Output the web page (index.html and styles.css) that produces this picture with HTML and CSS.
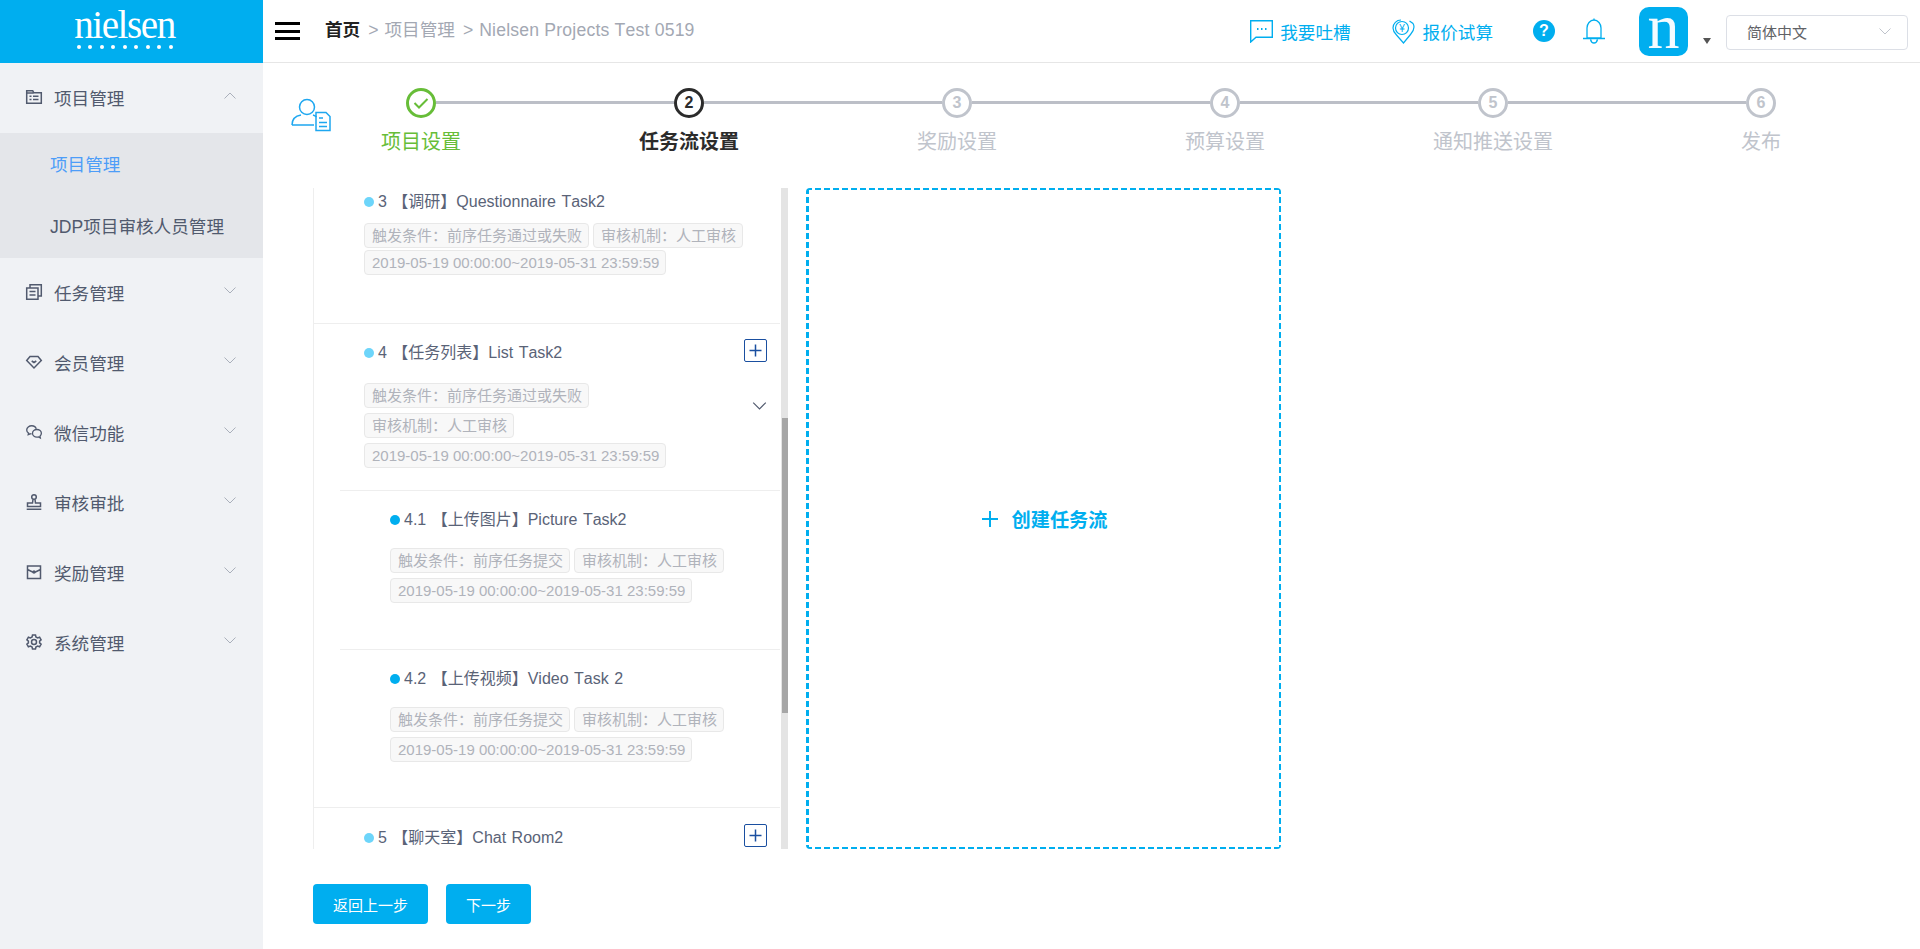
FILE: index.html
```html
<!DOCTYPE html>
<html lang="zh-CN">
<head>
  <meta charset="UTF-8" />
  <meta name="viewport" content="width=device-width, initial-scale=1" />
  <title>任务流设置</title>
  <link rel="stylesheet" href="styles.css">
</head>
<body>
  <svg class="sprite" width="0" height="0">
    <symbol id="chev" viewBox="0 0 12 7"><path d="M.5.5 6 6 11.500.5" fill="none" stroke="currentColor"/></symbol>
    <symbol id="plus" viewBox="0 0 23 23"><path d="M10.500 4.500v12M4.500 10.500h12" fill="none" stroke="currentColor" stroke-width="1.500"/></symbol>
  </svg>

  <aside class="sidebar">
    <div class="logo">
      <span class="logo-text">nielsen</span>
      <div class="logo-dots"><i></i><i></i><i></i><i></i><i></i><i></i><i></i><i></i><i></i></div>
    </div>
    <nav class="menu">
      <div class="menu-item">
        <svg class="menu-icon" viewBox="0 0 16 16"><path d="M.7 14.300V1.700h6l1 2h7.600v10.600zM.7 4h7" /><path d="M3.500 7.200h2M7 7.200h5.500M3.500 10.500h2M7 10.500h5.500"/></svg>
        <span>项目管理</span>
        <svg class="menu-chev up"><use href="#chev"/></svg>
      </div>
      <div class="submenu">
        <a class="sub-link active">项目管理</a>
        <a class="sub-link">JDP项目审核人员管理</a>
      </div>
      <div class="menu-item">
        <svg class="menu-icon" viewBox="0 0 16 16"><path d="M.7 4h11.300v11.300H.7z"/><path d="M4 4V.7h11.300v11.300H12M3.500 7.500h6M3.500 11h6"/></svg>
        <span>任务管理</span>
        <svg class="menu-chev"><use href="#chev"/></svg>
      </div>
      <div class="menu-item">
        <svg class="menu-icon" viewBox="0 0 16 16"><path d="M4 2.500h8L15.300 6.500 8 14 .7 6.500z"/><path d="M5.700 7 8 8.500 10.300 7"/></svg>
        <span>会员管理</span>
        <svg class="menu-chev"><use href="#chev"/></svg>
      </div>
      <div class="menu-item">
        <svg class="menu-icon" viewBox="0 0 18 16"><path d="M11.500 4.500C11 2.500 9 1 6.500 1 3.500 1 .8 3 .8 5.700c0 1.500.8 2.700 2 3.500L2.500 11l2.200-1c.6.200 1 .2 1.600.2"/><path d="M17.300 9.500c0-2.500-2.300-4.300-5-4.300s-5 1.800-5 4.300 2.300 4.300 5 4.300c.6 0 1.200-.1 1.800-.3l2 1.200-.4-2c1-.8 1.600-2 1.600-3.200z"/></svg>
        <span>微信功能</span>
        <svg class="menu-chev"><use href="#chev"/></svg>
      </div>
      <div class="menu-item">
        <svg class="menu-icon" viewBox="0 0 16 16"><circle cx="8" cy="3" r="2.300"/><path d="M7 5.300 6.500 9H1.500v3.500h13V9H9.500L9 5.300M.7 15.300h14.600"/></svg>
        <span>审核审批</span>
        <svg class="menu-chev"><use href="#chev"/></svg>
      </div>
      <div class="menu-item">
        <svg class="menu-icon" viewBox="0 0 16 16"><path d="M1.500 2h13v12.500h-13zM1.500 5.500l5 2.500h3l5-2.500"/><circle cx="8" cy="8" r="1"/></svg>
        <span>奖励管理</span>
        <svg class="menu-chev"><use href="#chev"/></svg>
      </div>
      <div class="menu-item">
        <svg class="menu-icon" viewBox="0 0 16 16"><path d="M6.500.9h3l.4 2 1.700 1 2-.7 1.500 2.600-1.500 1.300v1.800l1.500 1.300-1.500 2.600-2-.7-1.700 1-.4 2h-3l-.4-2-1.700-1-2 .7L.9 10.200l1.500-1.300V7.100L.9 5.800l1.500-2.600 2 .7 1.700-1z"/><circle cx="8" cy="8" r="2.500"/></svg>
        <span>系统管理</span>
        <svg class="menu-chev"><use href="#chev"/></svg>
      </div>
    </nav>
  </aside>

  <div class="main">
    <header class="topbar">
      <div class="hamburger"><i></i><i></i><i></i></div>
      <div class="crumbs">
        <b>首页</b><span class="sep">&gt;</span><span>项目管理</span><span class="sep">&gt;</span><span class="crumb-name">Nielsen Projects Test 0519</span>
      </div>
      <div class="top-right">
        <a class="top-link">
          <svg class="chat-icon" viewBox="0 0 23 23"><path d="M.7.7h21.600v16.600H6L.7 22z" /><path d="M7 9h1.500M11 9h1.500M15 9h1.500" stroke-width="2"/></svg>
          <span>我要吐槽</span>
        </a>
        <a class="top-link quote">
          <svg class="quote-icon" viewBox="0 0 23 25"><path d="M9 1C4.500 1 1 4.500 1 9c0 3 1.500 5 3.500 7l7 8 7-8.500c2-2.200 3.500-4.500 3.500-7.500 0-1.300-.3-2.500-1-3.500L17.500 2" /><circle cx="10" cy="9" r="6.500"/><text x="10" y="12.500" text-anchor="middle">¥</text></svg>
          <span>报价试算</span>
        </a>
        <span class="help">?</span>
        <svg class="bell" viewBox="0 0 24 26"><path d="M5 20V10c0-4 3-8 7-8s7 4 7 8v10zM1 20.500h22M8.500 21.500c.5 2 2 3.500 3.500 3.500s3-1.500 3.500-3.500M12 .5v1.500"/></svg>
        <div class="avatar">n</div>
        <span class="caret"></span>
        <div class="lang">
          <span>简体中文</span>
          <svg class="lang-chev"><use href="#chev"/></svg>
        </div>
      </div>
    </header>

    <section class="steps-row">
      <svg class="user-icon" viewBox="0 0 40 34"><circle cx="16" cy="9" r="7.500"/><path d="M1 27c0-6 3-9 9-10M22 17c1.500 .5 2.500 1 3.500 2M1 27h22"/><path d="M25 14.500h10l4 4v14H25z"/><path d="M28 20h4M28 24.500h8M28 28.500h8"/></svg>
      <ol class="steps">
        <li class="step done">
          <span class="circle"><svg viewBox="0 0 16 16" width="16" height="16"><path d="M1.500 8 6 12.500 14.500 4" fill="none" stroke="currentColor" stroke-width="2"/></svg></span>
          <span class="step-label">项目设置</span>
        </li>
        <li class="step current"><span class="circle">2</span><span class="step-label">任务流设置</span></li>
        <li class="step"><span class="circle">3</span><span class="step-label">奖励设置</span></li>
        <li class="step"><span class="circle">4</span><span class="step-label">预算设置</span></li>
        <li class="step"><span class="circle">5</span><span class="step-label">通知推送设置</span></li>
        <li class="step"><span class="circle">6</span><span class="step-label">发布</span></li>
      </ol>
    </section>

    <section class="workspace">
      <div class="list-panel">
        <div class="list">
          <div class="item item-first">
            <div class="item-title"><i class="dot"></i>3 【调研】Questionnaire Task2</div>
            <div class="tags tags-tight">
              <span class="tag">触发条件：前序任务通过或失败</span>
              <span class="tag">审核机制：人工审核</span>
              <span class="tag">2019-05-19 00:00:00~2019-05-31 23:59:59</span>
            </div>
          </div>

          <div class="item item-open">
            <div class="item-head">
              <div class="item-title"><i class="dot"></i>4 【任务列表】List Task2</div>
              <span class="add"><svg width="23" height="23"><use href="#plus"/></svg></span>
            </div>
            <div class="item-body">
              <div class="tags tags-narrow">
                <span class="tag">触发条件：前序任务通过或失败</span>
                <span class="tag">审核机制：人工审核</span>
                <span class="tag">2019-05-19 00:00:00~2019-05-31 23:59:59</span>
              </div>
              <svg class="fold"><use href="#chev"/></svg>
            </div>
            <div class="sub">
              <div class="item-title"><i class="dot dot-sub"></i>4.1 【上传图片】Picture Task2</div>
              <div class="tags">
                <span class="tag">触发条件：前序任务提交</span>
                <span class="tag">审核机制：人工审核</span>
                <span class="tag">2019-05-19 00:00:00~2019-05-31 23:59:59</span>
              </div>
            </div>
            <div class="sub sub-last">
              <div class="item-title"><i class="dot dot-sub"></i>4.2 【上传视频】Video Task 2</div>
              <div class="tags">
                <span class="tag">触发条件：前序任务提交</span>
                <span class="tag">审核机制：人工审核</span>
                <span class="tag">2019-05-19 00:00:00~2019-05-31 23:59:59</span>
              </div>
            </div>
          </div>

          <div class="item item-last">
            <div class="item-head">
              <div class="item-title"><i class="dot"></i>5 【聊天室】Chat Room2</div>
              <span class="add"><svg width="23" height="23"><use href="#plus"/></svg></span>
            </div>
          </div>
        </div>
        <div class="scroll-track"><div class="scroll-thumb"></div></div>
      </div>

      <div class="create-box">
        <svg class="create-plus" viewBox="0 0 16 16"><path d="M8 0v16M0 8h16" fill="none" stroke="currentColor" stroke-width="2"/></svg>
        <span>创建任务流</span>
      </div>
    </section>

    <footer class="actions">
      <button class="btn">返回上一步</button>
      <button class="btn">下一步</button>
    </footer>
  </div>
</body>
</html>
```

FILE: styles.css
```css
* {
  box-sizing: border-box;
}
html,
body {
  margin: 0;
  height: 949px;
  overflow: hidden;
}
body {
  display: flex;
  font-family: "Liberation Sans", "Noto Sans CJK SC", sans-serif;
  background: #fff;
  color: #515a6e;
}
.sprite {
  position: absolute;
}

/* sidebar */
.sidebar {
  width: 263px;
  flex: none;
  background: #f0f2f5;
}
.logo {
  height: 63px;
  background: #00aeef;
  color: #fff;
  display: flex;
  flex-direction: column;
  align-items: center;
  padding: 9px 14px 0 0;
}
.logo-text {
  font-family: "Liberation Serif", serif;
  font-size: 39px;
  line-height: 32px;
  letter-spacing: -1.400px;
}
.logo-dots {
  width: 96px;
  margin-top: 4px;
  display: flex;
  justify-content: space-between;
}
.logo-dots i {
  width: 4px;
  height: 4px;
  border-radius: 50%;
  background: #fff;
}
.menu-item {
  height: 70px;
  display: flex;
  align-items: center;
  padding: 0 0 2px 26px;
  font-size: 17.600px;
}
.menu-icon {
  width: 16px;
  height: 16px;
  margin-right: 12px;
  fill: none;
  stroke: #515a6e;
  stroke-width: 1.500;
  overflow: visible;
}
.menu-chev {
  width: 12px;
  height: 7px;
  margin-left: auto;
  margin-right: 27px;
  color: #aab0bb;
  margin-top: -4px;
}
.menu-chev.up {
  transform: rotate(180deg);
}
.submenu {
  background: #e4e6ea;
  height: 125px;
  padding-top: 1px;
}
.sub-link {
  display: block;
  height: 62px;
  line-height: 62px;
  padding-left: 50px;
  font-size: 17.600px;
}
.sub-link.active {
  color: #4d9df8;
}

/* top bar */
.main {
  flex: 1;
  min-width: 0;
}
.topbar {
  height: 63px;
  border-bottom: 1px solid #e6e6e6;
  display: flex;
  align-items: center;
  padding-left: 12px;
}
.hamburger {
  width: 25px;
  height: 18px;
  display: flex;
  flex-direction: column;
  justify-content: space-between;
  margin-right: 25px;
}
.hamburger i {
  height: 3px;
  background: #000;
}
.crumbs {
  font-size: 17.600px;
  line-height: 24px;
  color: #a3a8b3;
  display: flex;
  align-items: baseline;
  margin-top: -2px;
}
.crumbs b {
  color: #222;
}
.crumb-name {
  font-kerning: none;
  letter-spacing: .2px;
}
.sep {
  margin: 0 6px 0 8px;
}
.top-right {
  margin-left: auto;
  display: flex;
  align-items: center;
}
.top-link {
  display: flex;
  align-items: center;
  font-size: 17.600px;
  color: #00aeef;
  white-space: nowrap;
}
.chat-icon {
  width: 23px;
  height: 23px;
  margin-right: 7px;
  fill: none;
  stroke: #00aeef;
  stroke-width: 1.400;
}
.quote {
  margin-left: 41px;
}
.quote-icon {
  width: 23px;
  height: 25px;
  margin-right: 8px;
  fill: none;
  stroke: #00aeef;
  stroke-width: 1.200;
}
.quote-icon text {
  font-size: 10px;
  fill: #00aeef;
  stroke: none;
}
.help {
  width: 22px;
  height: 22px;
  margin-left: 40px;
  border-radius: 50%;
  background: #00aeef;
  color: #fff;
  font-size: 16px;
  font-weight: bold;
  line-height: 22px;
  text-align: center;
}
.bell {
  width: 24px;
  height: 26px;
  margin-left: 27px;
  fill: none;
  stroke: #00aeef;
  stroke-width: 1.300;
}
.avatar {
  width: 49px;
  height: 49px;
  margin-left: 33px;
  border-radius: 10px;
  background: #00aeef;
  color: #f4fbff;
  font-family: "Liberation Serif", serif;
  font-size: 64px;
  line-height: 39px;
  text-align: center;
}
.caret {
  width: 0;
  height: 0;
  margin: 20px 0 0 15px;
  border-style: solid;
  border-width: 6px 4.500px 0;
  border-color: #555 transparent transparent;
}
.lang {
  width: 182px;
  height: 35px;
  margin: 3px 12px 0 15px;
  padding: 0 16px 2px 20px;
  border: 1px solid #dcdfe6;
  border-radius: 4px;
  display: flex;
  align-items: center;
  justify-content: space-between;
  font-size: 15px;
  color: #606266;
}
.lang-chev {
  width: 12px;
  height: 7px;
  color: #c0c4cc;
}

/* steps */
.steps-row {
  height: 125px;
  padding: 25px 0 0 28px;
  display: flex;
}
.user-icon {
  width: 40px;
  height: 34px;
  margin: 10px 10px 0 0;
  fill: none;
  stroke: #1ea7f0;
  stroke-width: 1.500;
}
.steps {
  list-style: none;
  margin: 0;
  padding: 0;
  display: flex;
  gap: 108px;
}
.step {
  width: 160px;
  display: flex;
  flex-direction: column;
  align-items: center;
  position: relative;
  color: #c0c4cc;
}
.step:not(:last-child)::after {
  content: "";
  position: absolute;
  left: 95px;
  top: 13px;
  width: 238px;
  height: 3px;
  background: #bcbfc7;
}
.circle {
  width: 30px;
  height: 30px;
  border: 3px solid currentColor;
  border-radius: 50%;
  display: flex;
  align-items: center;
  justify-content: center;
  font-size: 16px;
  font-weight: bold;
}
.step-label {
  margin-top: 10px;
  font-size: 20px;
  line-height: 28px;
  white-space: nowrap;
}
.step.done {
  color: #67bd38;
}
.step.current {
  color: #2b2b2b;
}
.step.current .step-label {
  font-weight: bold;
}

/* task list */
.workspace {
  margin-left: 50px;
  height: 661px;
  display: flex;
  gap: 18px;
}
.list-panel {
  width: 475px;
  height: 661px;
  display: flex;
  overflow: hidden;
}
.list {
  flex: 1;
  border-left: 1px solid #eee;
}
.scroll-track {
  width: 7px;
  margin-left: 1px;
  background: #e4e4e4;
}
.scroll-thumb {
  width: 6px;
  height: 295px;
  margin: 230px 0 0 1px;
  background: #a6a6a6;
}
.item {
  border-bottom: 1px solid #eee;
  padding: 17px 13px 0 50px;
}
.item-first {
  padding-top: 2px;
  padding-bottom: 48px;
}
.item-open {
  padding: 17px 0 0 0;
}
.item-open > .item-head,
.item-open > .item-body {
  padding-left: 50px;
  padding-right: 13px;
}
.item-last {
  border-bottom: 0;
  padding-top: 18px;
}
.item-head {
  display: flex;
  justify-content: space-between;
}
.item-title {
  display: flex;
  align-items: center;
  color: #5a6377;
  font-size: 16px;
  font-kerning: none;
  line-height: 24px;
  word-spacing: 1px;
  white-space: pre;
}
.dot {
  width: 10px;
  height: 10px;
  margin-right: 4px;
  border-radius: 50%;
  background: #6dd5fa;
}
.dot-sub {
  background: #00aeef;
}
.add {
  width: 23px;
  height: 23px;
  margin-top: -2px;
  border: 1px solid #1a4fa0;
  border-radius: 2px;
  color: #1a4fa0;
}
.add svg {
  display: block;
}
.item-body {
  display: flex;
  justify-content: space-between;
  margin-top: 18px;
  padding-bottom: 22px;
}
.fold {
  width: 15px;
  height: 8px;
  margin-top: 19px;
  color: #515a6e;
}
.tags {
  display: flex;
  flex-wrap: wrap;
  gap: 5px 4px;
}
.tags-tight {
  margin-top: 9px;
  row-gap: 2px;
}
.tags-narrow {
  width: 370px;
}
.tag {
  height: 25px;
  line-height: 23px;
  padding: 0 6px 0 7px;
  border: 1px solid #e8e8e8;
  border-radius: 4px;
  background: #f8f8f8;
  color: #b0b3bb;
  font-size: 15px;
  white-space: nowrap;
}
.sub {
  margin-left: 26px;
  padding: 17px 0 46px 50px;
  border-top: 1px solid #eee;
}
.sub-last {
  padding-bottom: 45px;
}
.sub .tags {
  margin-top: 16px;
}

/* create box: dash pattern is wider than a 2px dashed border gives */
.create-box {
  width: 475px;
  height: 661px;
  padding-left: 2px;
  border-radius: 4px;
  display: flex;
  align-items: center;
  justify-content: center;
  color: #00aeef;
  font-size: 19.200px;
  font-weight: bold;
  background:
    repeating-linear-gradient(90deg, #00aeef 0 6px, transparent 6px 9px) left top / 100% 2px no-repeat,
    repeating-linear-gradient(90deg, #00aeef 0 6px, transparent 6px 9px) left bottom / 100% 2px no-repeat,
    repeating-linear-gradient(180deg, #00aeef 0 6px, transparent 6px 9px) left top / 3px 100% no-repeat,
    repeating-linear-gradient(180deg, #00aeef 0 6px, transparent 6px 9px) right top / 2px 100% no-repeat;
}
.create-plus {
  width: 16px;
  height: 16px;
  margin-right: 14px;
}

/* footer buttons */
.actions {
  margin: 35px 0 0 50px;
  display: flex;
  gap: 18px;
}
.btn {
  height: 40px;
  padding: 0 20px;
  border: none;
  border-radius: 4px;
  background: #00aeef;
  color: #fff;
  font-family: inherit;
  font-size: 15px;
}
```
